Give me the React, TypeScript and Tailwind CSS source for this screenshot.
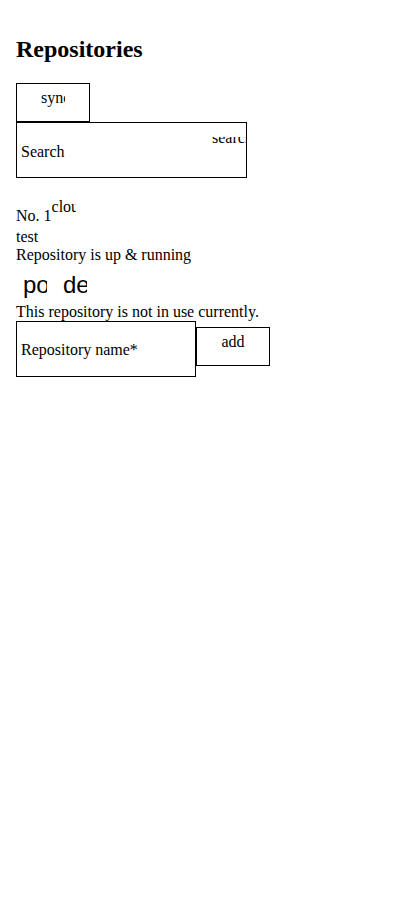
import React from "react";

export default function App() {
  return (
    <div className="min-h-[920px] bg-white px-4 pt-px font-['Liberation_Serif',serif] text-[16px] leading-[1.15] text-black">
      <h2 className="mt-[35px] mb-[19px] text-[24px] font-bold leading-[1.15]">Repositories</h2>

      <div className="flex h-[39px] w-[74px] justify-center border border-black pt-[5.2px]">
        <span className="block w-[24px] overflow-hidden whitespace-nowrap">sync</span>
      </div>

      <div className="relative flex h-[56px] w-[231px] items-start overflow-hidden border border-black pl-[4px] pt-[20.2px]">
        <span>Search</span>
        <div className="absolute left-[195px] top-[14px] h-[8px] overflow-hidden whitespace-nowrap">
          <span className="-mt-[7.6px] block">search</span>
        </div>
      </div>

      <div className="mt-[19px]">
        <div className="flex h-[31.6px] items-start">
          <span className="mt-[10.8px]">No. 1</span>
          <span className="block h-[24px] w-[24px] overflow-hidden whitespace-nowrap pt-[1.2px]">cloud</span>
        </div>
        <div>test</div>
        <div className="-mt-[0.5px]">Repository is up &amp; running</div>
        <div className="flex h-[38.5px] items-start pt-[6.8px] font-['Liberation_Sans',Arial,sans-serif] text-[24px] leading-[1.15]">
          <span className="ml-[7px] w-[24px] overflow-hidden whitespace-nowrap">power_settings_new</span>
          <span className="ml-[16px] w-[24px] overflow-hidden whitespace-nowrap">delete</span>
        </div>
        <div>This repository is not in use currently.</div>
      </div>

      <div className="-mt-[0.8px] flex items-start">
        <div className="flex h-[56px] w-[180px] items-start border border-black pl-[4px] pt-[19.4px]">
          <span>Repository name*</span>
        </div>
        <div className="mt-[6px] flex h-[39px] w-[74px] justify-center border border-black pt-[5.6px]">
          <span>add</span>
        </div>
      </div>
    </div>
  );
}
